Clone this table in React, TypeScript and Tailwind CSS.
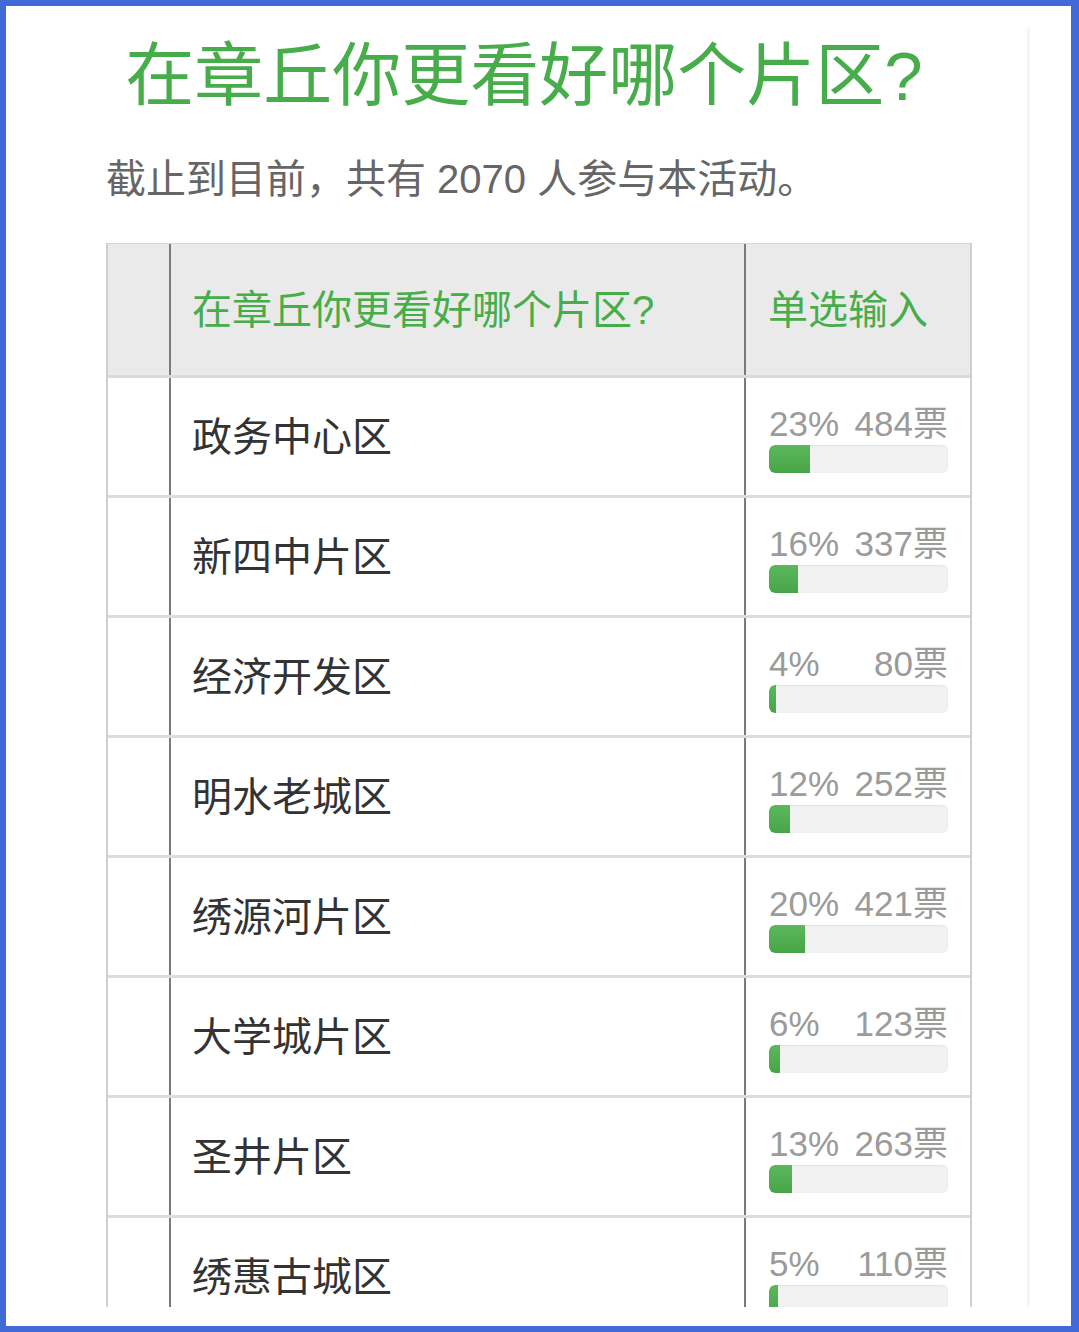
import React from "react";

const rows = [
  { name: "政务中心区", pct: 23, votes: 484 },
  { name: "新四中片区", pct: 16, votes: 337 },
  { name: "经济开发区", pct: 4, votes: 80 },
  { name: "明水老城区", pct: 12, votes: 252 },
  { name: "绣源河片区", pct: 20, votes: 421 },
  { name: "大学城片区", pct: 6, votes: 123 },
  { name: "圣井片区", pct: 13, votes: 263 },
  { name: "绣惠古城区", pct: 5, votes: 110 },
];

const font = { fontFamily: '"Liberation Sans", "Noto Sans CJK SC", sans-serif' };

export default function App() {
  return (
    <div className="w-[1079px] h-[1332px] bg-[#4169d8] pt-[6px] pl-[6px] pr-[8px] pb-[6px]" style={font}>
      <div className="flex h-full bg-white">
        <div className="w-[1021px] h-[1301px] overflow-hidden">
          <h1 className="mt-[33px] pl-[15px] text-center text-[69px] leading-[76px] text-[#47ad4b]">
            在章丘你更看好哪个片区?
          </h1>
          <p className="mt-[44px] ml-[100px] text-[40px] leading-[40px] text-[#666666]">
            截止到目前，共有 2070 人参与本活动。
          </p>

          <div className="mt-[44px] ml-[100px] w-[866px] border-x-2 border-[#cfcfcf]">
            {/* 表头 */}
            <div className="flex h-[135px] border-t border-b-[3px] border-t-[#d6d6d6] border-b-[#dadada] bg-[#eaeaea]">
              <div className="w-[63px] border-r-2 border-[#7a7a7a]" />
              <div className="flex w-[575px] items-center border-r-2 border-[#7a7a7a] pl-[21px] text-[40px] text-[#47ad4b]">
                在章丘你更看好哪个片区?
              </div>
              <div className="flex w-[224px] items-center pl-[22px] text-[40px] text-[#47ad4b]">
                单选输入
              </div>
            </div>

            {rows.map((r) => (
              <div key={r.name} className="flex h-[120px] border-b-[3px] border-[#dcdcdc]">
                <div className="w-[63px] border-r-2 border-[#7a7a7a]" />
                <div className="flex w-[575px] items-center border-r-2 border-[#7a7a7a] pl-[21px] text-[40px] text-[#333333]">
                  {r.name}
                </div>
                <div className="flex w-[224px] flex-col gap-[3px] pl-[23px] pt-[28px]">
                  <div className="flex w-[179px] justify-between text-[35px] leading-[36px] text-[#9b9b9b]">
                    <span>{r.pct}%</span>
                    <span>{r.votes}票</span>
                  </div>
                  <div className="h-[28px] w-[179px] overflow-hidden rounded-[6px] bg-[#f2f2f2] shadow-[inset_0_1px_2px_rgba(0,0,0,0.08)]">
                    <div
                      className="h-full rounded-l-[6px] bg-gradient-to-b from-[#5cb85c] to-[#47a447]"
                      style={{ width: `${r.pct}%` }}
                    />
                  </div>
                </div>
              </div>
            ))}
          </div>
        </div>
        <div className="mt-[22px] h-[1279px] w-[3px] bg-[#f5f5f5]" />
      </div>
    </div>
  );
}
